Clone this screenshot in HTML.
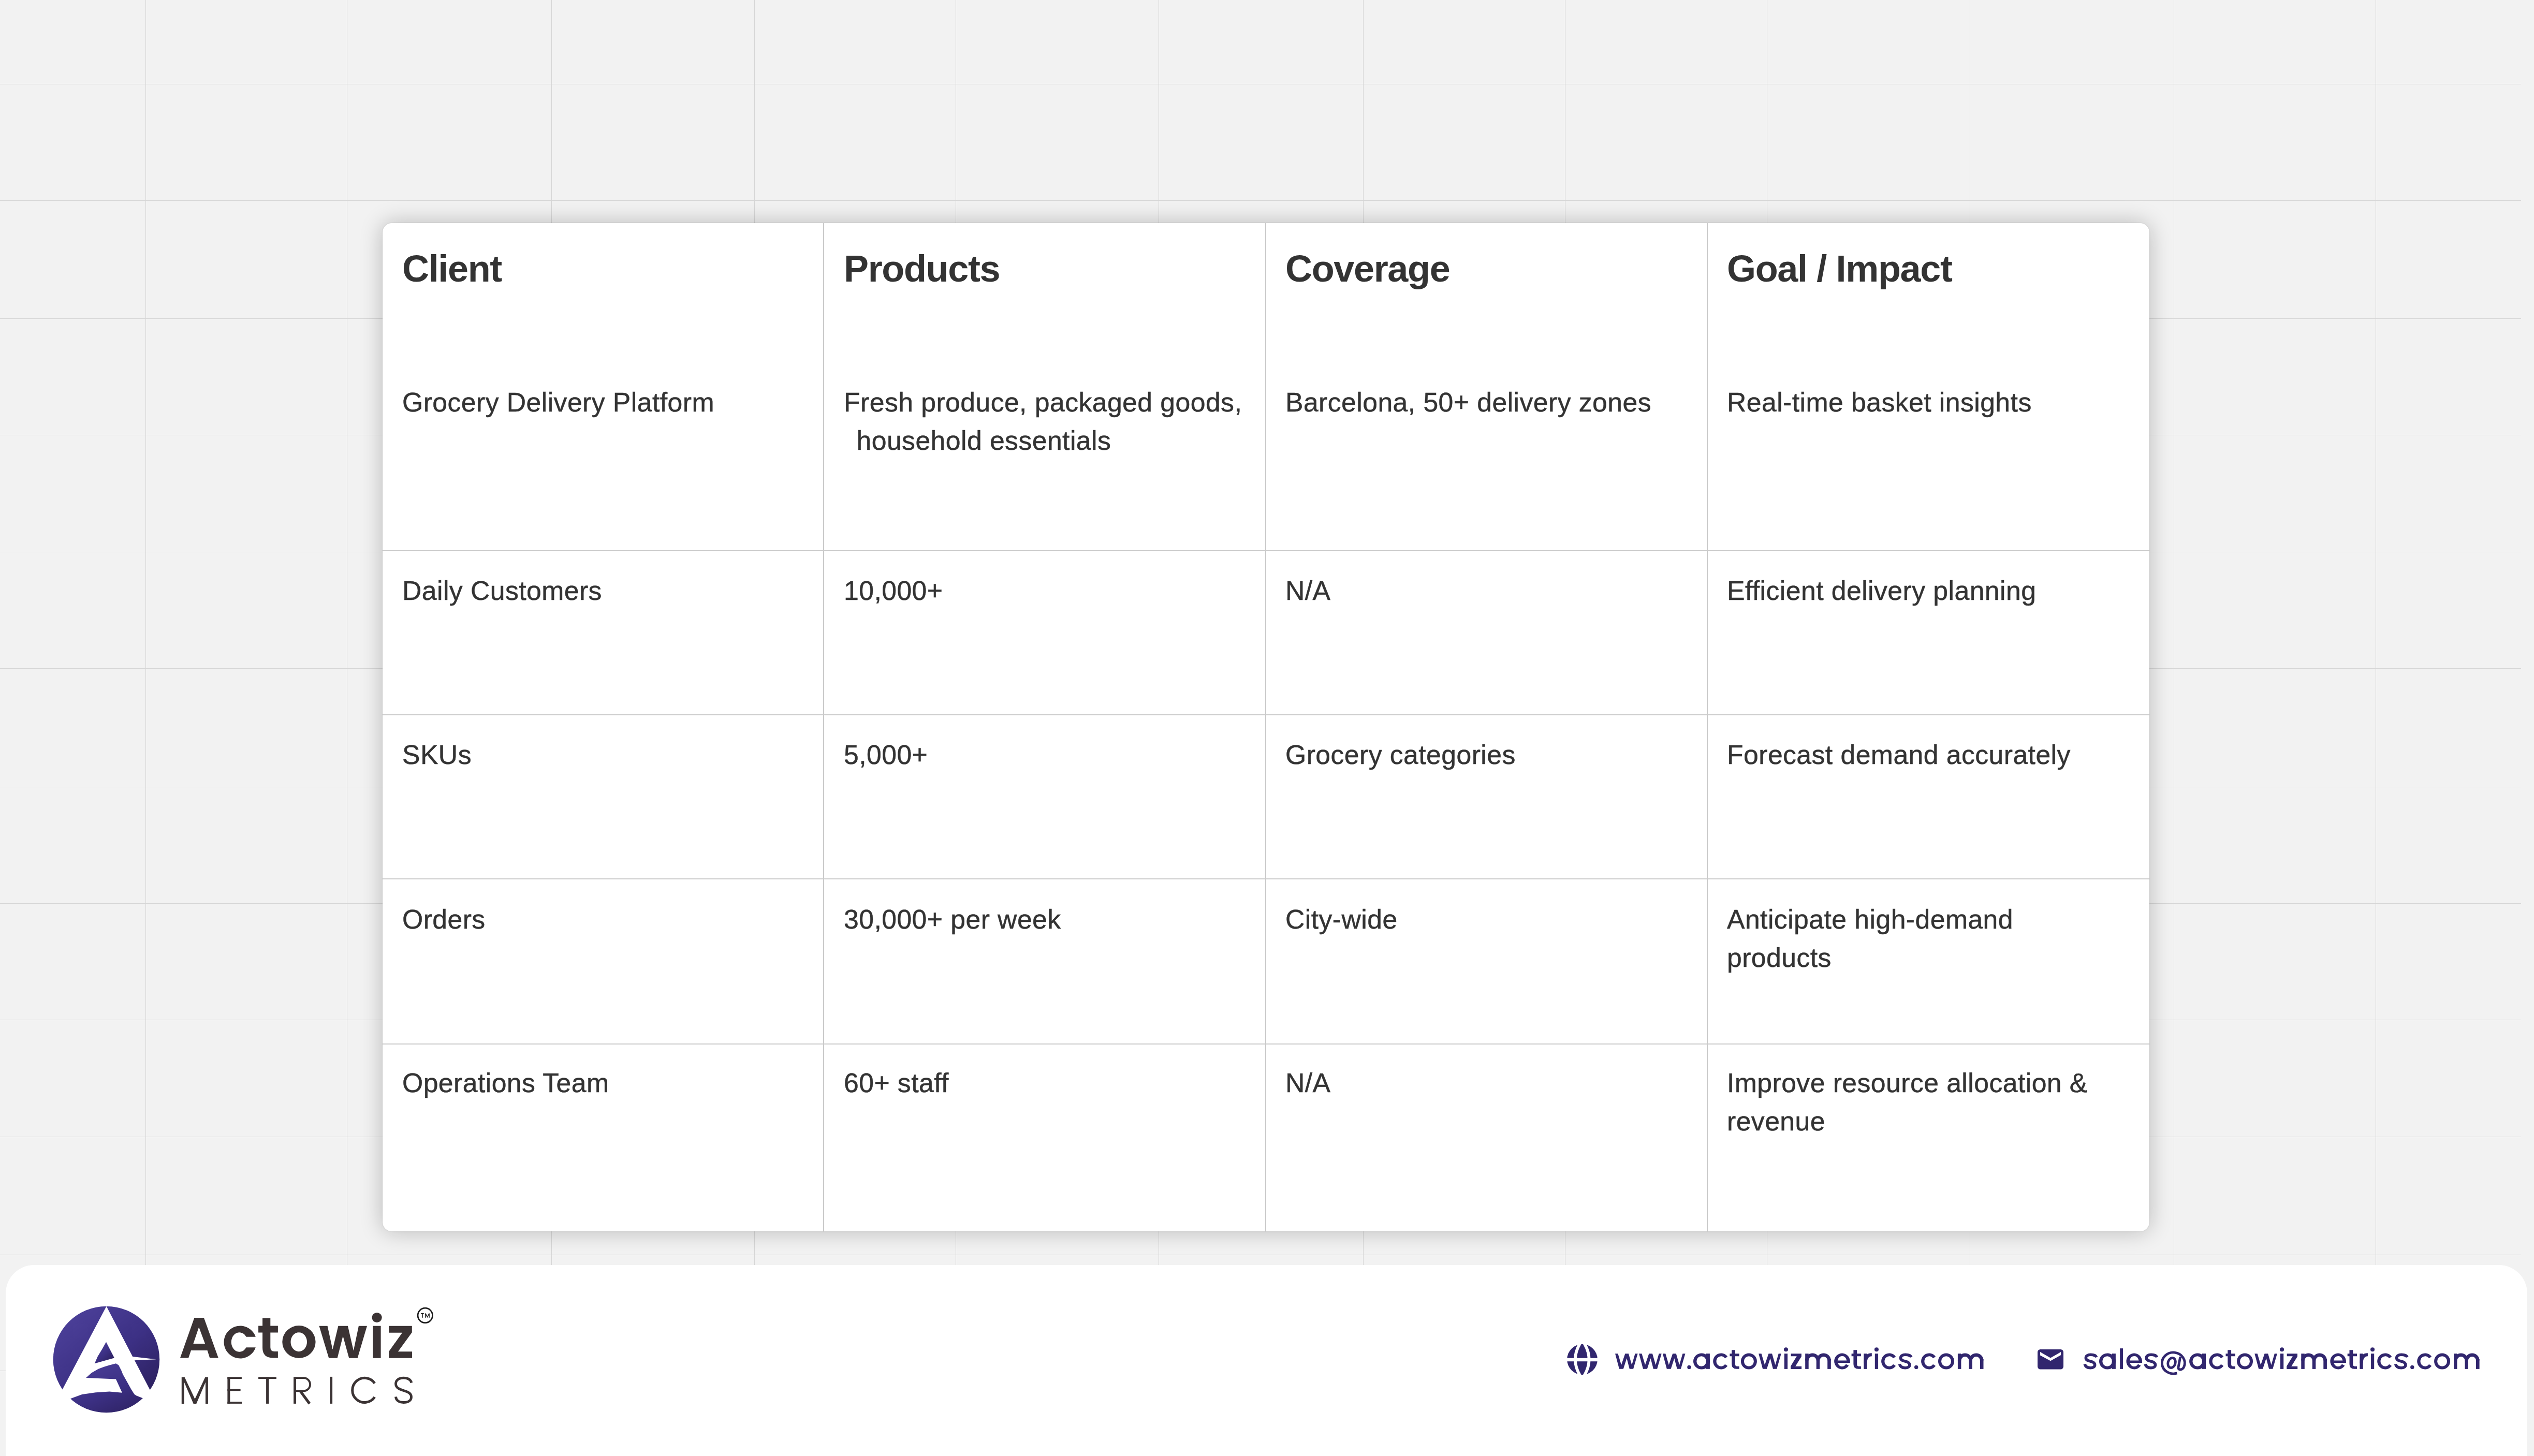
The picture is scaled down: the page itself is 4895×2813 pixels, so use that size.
<!DOCTYPE html>
<html>
<head>
<meta charset="utf-8">
<style>
html,body{margin:0;padding:0;}
body{width:4895px;height:2813px;overflow:hidden;position:relative;background:#f2f2f2;font-family:"Liberation Sans",sans-serif;}
.gv{position:absolute;top:0;width:1px;height:2813px;background:#d6d6d6;}
.gh{position:absolute;left:0;width:4870px;height:1px;background:#d6d6d6;}
#card{position:absolute;left:739px;top:431px;width:3413px;height:1948px;background:#fff;border-radius:18px;box-shadow:0 0 44px rgba(0,0,0,0.24),0 0 2px rgba(0,0,0,0.18);overflow:hidden;}
.cv{position:absolute;top:0;width:2px;height:1948px;background:#c9c9c9;}
.ch{position:absolute;left:0;width:3413px;height:2px;background:#cbcbcb;}
.t{position:absolute;white-space:nowrap;color:#333;font-size:51.7px;line-height:74.6px;letter-spacing:0.45px;-webkit-text-stroke:0.5px #333;margin-top:0.5px;}
.h{position:absolute;white-space:nowrap;color:#333;font-size:72px;font-weight:bold;line-height:80px;letter-spacing:-1.35px;}
#footer{position:absolute;left:11px;top:2444px;width:4871px;height:500px;background:#fff;border-radius:55px;}
</style>
</head>
<body>
<!-- grid -->
<div class="gv" style="left:281px"></div>
<div class="gv" style="left:670px"></div>
<div class="gv" style="left:1065px"></div>
<div class="gv" style="left:1457px"></div>
<div class="gv" style="left:1846px"></div>
<div class="gv" style="left:2238px"></div>
<div class="gv" style="left:2633px"></div>
<div class="gv" style="left:3023px"></div>
<div class="gv" style="left:3413px"></div>
<div class="gv" style="left:3805px"></div>
<div class="gv" style="left:4199px"></div>
<div class="gv" style="left:4589px"></div>
<div class="gh" style="top:162px"></div>
<div class="gh" style="top:387px"></div>
<div class="gh" style="top:615px"></div>
<div class="gh" style="top:840px"></div>
<div class="gh" style="top:1066px"></div>
<div class="gh" style="top:1291px"></div>
<div class="gh" style="top:1520px"></div>
<div class="gh" style="top:1745px"></div>
<div class="gh" style="top:1970px"></div>
<div class="gh" style="top:2196px"></div>
<div class="gh" style="top:2424px"></div>
<div class="gh" style="top:2648px"></div>

<div id="card">
  <div class="cv" style="left:851px"></div>
  <div class="cv" style="left:1705px"></div>
  <div class="cv" style="left:2558px"></div>
  <div class="ch" style="top:632px"></div>
  <div class="ch" style="top:949px"></div>
  <div class="ch" style="top:1266px"></div>
  <div class="ch" style="top:1585px"></div>

  <div class="h" style="left:38px;top:48px">Client</div>
  <div class="h" style="left:891px;top:48px">Products</div>
  <div class="h" style="left:1744px;top:48px">Coverage</div>
  <div class="h" style="left:2597px;top:48px">Goal / Impact</div>

  <div class="t" style="left:38px;top:308px">Grocery Delivery Platform</div>
  <div class="t" style="left:891px;top:308px">Fresh produce, packaged goods,<br><span style="margin-left:24.5px">household essentials</span></div>
  <div class="t" style="left:1744px;top:308px">Barcelona, 50+ delivery zones</div>
  <div class="t" style="left:2597px;top:308px">Real-time basket insights</div>

  <div class="t" style="left:38px;top:672px">Daily Customers</div>
  <div class="t" style="left:891px;top:672px">10,000+</div>
  <div class="t" style="left:1744px;top:672px">N/A</div>
  <div class="t" style="left:2597px;top:672px">Efficient delivery planning</div>

  <div class="t" style="left:38px;top:989px">SKUs</div>
  <div class="t" style="left:891px;top:989px">5,000+</div>
  <div class="t" style="left:1744px;top:989px">Grocery categories</div>
  <div class="t" style="left:2597px;top:989px">Forecast demand accurately</div>

  <div class="t" style="left:38px;top:1307px">Orders</div>
  <div class="t" style="left:891px;top:1307px">30,000+ per week</div>
  <div class="t" style="left:1744px;top:1307px">City-wide</div>
  <div class="t" style="left:2597px;top:1307px">Anticipate high-demand<br>products</div>

  <div class="t" style="left:38px;top:1623px">Operations Team</div>
  <div class="t" style="left:891px;top:1623px">60+ staff</div>
  <div class="t" style="left:1744px;top:1623px">N/A</div>
  <div class="t" style="left:2597px;top:1623px">Improve resource allocation &amp;<br>revenue</div>
</div>

<div id="footer">
  <svg style="position:absolute;left:84px;top:71px" width="220" height="220" viewBox="0 0 1456 1456">
    <defs>
      <linearGradient id="lg" x1="0.15" y1="0.1" x2="0.85" y2="0.95">
        <stop offset="0" stop-color="#4b3f98"/>
        <stop offset="0.5" stop-color="#3c3084"/>
        <stop offset="1" stop-color="#2b1f5c"/>
      </linearGradient>
      <clipPath id="cc"><circle cx="731" cy="738" r="680"/></clipPath>
    </defs>
    <circle cx="731" cy="738" r="680" fill="url(#lg)"/>
    <polygon fill="#fff" points="732,58 1460,1456 -8,1456"/>
    <polygon fill="#fff" points="1040,698 1368,736 1080,750"/>
    <polygon fill="url(#lg)" points="728,515 833,718 581,790 620,700 680,600"/>
    <g clip-path="url(#cc)">
    <polygon fill="url(#lg)" points="471,973 540,910 629,858 700,832 770,811 853,790 888,811 924,882 942,929 995,1023 1048,1118 1089,1183 1113,1200 1196,1233 1400,1300 1400,1500 60,1500 120,1300 298,1230 420,1185 593,1160 770,1148 933,1163 853,989"/>
    </g>
  </svg>
    

  <svg style="position:absolute;left:3016px;top:153px" width="60" height="60" viewBox="0 0 60 60">
    <circle cx="29.5" cy="29.5" r="29.4" fill="#31266e"/>
    <rect x="-1" y="26.8" width="62" height="6.4" fill="#fff"/>
    <path d="M26.1,-3.5 L24.2,0 Q7.8,29.5 24.2,59 L26.1,62.5" fill="none" stroke="#fff" stroke-width="5.8" stroke-linejoin="round"/>
    <path d="M32.5,-3.5 L34.4,0 Q50.8,29.5 34.4,59 L32.5,62.5" fill="none" stroke="#fff" stroke-width="5.8" stroke-linejoin="round"/>
  </svg>
  <svg style="position:absolute;left:3925px;top:163px" width="50" height="39" viewBox="0 0 50 39">
    <rect x="0" y="0" width="50" height="38.5" rx="5.5" fill="#31266e"/>
    <polygon points="5,5.1 25,16.4 45.1,5 45.1,11.1 25,22.3 5,11.5" fill="#fff"/>
  </svg>
</div>
<svg style="position:absolute;left:0;top:0" width="4895" height="2813" viewBox="0 0 4895 2813">
  <g fill="#3b3334">
    <polygon points="350.8,2711.9 350.8,2660.8 356.6,2660.8 376.5,2702.8 396.4,2660.8 401.9,2660.8 401.9,2711.9 397,2711.9 397,2670.5 379.3,2711.9 373.7,2711.9 355.8,2670.5 355.8,2711.9"/>
    <rect x="439.4" y="2660.3" width="5" height="51.6"/>
    <rect x="439.4" y="2660.3" width="27.5" height="3.8"/>
    <rect x="439.4" y="2683.7" width="25.2" height="3.6"/>
    <rect x="439.4" y="2708.1" width="27.6" height="3.8"/>
    <rect x="499.1" y="2660.3" width="34.8" height="3.8"/>
    <rect x="514.1" y="2660.3" width="5.3" height="51.6"/>
    <rect x="567.1" y="2660.3" width="4.9" height="51.6"/>
    <rect x="637.4" y="2659.9" width="4.7" height="52"/>
  </g>
  <defs>
    <g id="gw"><polygon points="0,2615.15 5.37,2615.15 11.87,2636.93 19.26,2615.15 25.88,2615.15 32.2,2636.93 38.51,2615.15 43.56,2615.15 35.04,2644.82 27.78,2644.82 22.41,2624.31 15.78,2644.82 7.89,2644.82"/></g>
    <g id="gdot"><circle cx="3.7" cy="2641.4" r="3.7"/></g>
    <g id="ga"><path fill-rule="evenodd" d="M0,2630 A16,15.5 0 1 0 32,2630 A16,15.5 0 1 0 0,2630 Z M6.3,2630 A9.3,9.8 0 1 0 24.9,2630 A9.3,9.8 0 1 0 6.3,2630 Z"/><rect x="24.9" y="2615.15" width="7" height="29.65"/></g>
    <g id="gc"><path d="M28.04,2620.89 A15.5,15.5 0 1 0 28.04,2639.11 L22.94,2635.76 A9.2,9.8 0 1 1 22.94,2624.24 Z"/></g>
    <g id="gt"><path d="M3.8,2608.2 H10.6 V2615.15 H18.3 V2620.2 H10.6 V2636 Q10.6,2639.8 14.4,2639.8 H18.3 V2644.8 H13.2 Q3.8,2644.8 3.8,2635.5 V2620.2 H0 V2615.15 H3.8 Z"/></g>
    <g id="go"><path fill-rule="evenodd" d="M0,2630 A15.5,15.5 0 1 0 31,2630 A15.5,15.5 0 1 0 0,2630 Z M6,2630 A9.5,9.8 0 1 0 25,2630 A9.5,9.8 0 1 0 6,2630 Z"/></g>
    <g id="gi"><rect x="0" y="2615.2" width="6.3" height="29.7"/><circle cx="3.15" cy="2607.3" r="4"/></g>
    <g id="gz"><polygon points="0.5,2615.2 20.8,2615.2 20.8,2620.8 9.1,2639.8 21,2639.8 21,2644.9 0,2644.9 0,2639.4 11.7,2620.3 0.5,2620.3"/></g>
    <g id="gm"><rect x="0" y="2615.2" width="6.5" height="29.7"/><rect x="21.5" y="2626" width="6.5" height="18.9"/><rect x="43" y="2626" width="6.6" height="18.9"/><path d="M0,2628.5 A14,14 0 0 1 28,2628.5 H21.5 A7.5,7.5 0 0 0 6.5,2628.5 Z M21.5,2628.5 A14.05,14.05 0 0 1 49.6,2628.5 H43 A7.5,7.5 0 0 0 28,2628.5 Z"/></g>
    <g id="ge"><path d="M30.6,2630 A15.3,15.45 0 1 0 28.13,2638.41 L22.68,2635.5 A8.8,10.1 0 1 1 24.1,2630 Z"/><rect x="6" y="2628.5" width="24.6" height="4.5"/></g>
    <g id="gr"><rect x="0" y="2615.2" width="6.3" height="29.7"/><path d="M0,2634 C0,2620 5.7,2614.3 15.5,2614.3 V2620.3 C8.7,2620.3 6.3,2626 6.3,2634 Z"/></g>
    <g id="gs"><path fill="none" stroke="#31266e" stroke-width="5.5" d="M23.8,2622.3 C23,2619.3 18.5,2617.3 12.4,2617.3 C7,2617.3 3.3,2619.8 3.3,2623.5 C3.3,2627.8 7.5,2628.8 12,2630 C17,2631.2 20.7,2632.7 20.7,2637 C20.7,2640.5 17.3,2642.7 12.2,2642.7 C6,2642.7 2.2,2640 1.2,2635.4"/></g>
    <g id="gl"><rect x="0" y="2605.1" width="6" height="39.8"/></g>
    <g id="gat"><g fill="none" stroke="#31266e" stroke-width="4.8"><path d="M31.56,2652.88 A22,20.5 0 1 1 45.07,2640.51"/><ellipse cx="0" cy="0" rx="7.1" ry="9.7" transform="translate(21.2,2633) rotate(18)"/><path d="M37.9,2621.2 L34.1,2641.5 Q33.9,2646.3 38.3,2646 Q42.8,2645.6 45.07,2640.51"/></g></g>
  </defs>
  <g fill="#31266e"><use href="#gw" x="3120.05"/><use href="#gw" x="3166.1"/><use href="#gw" x="3211.9"/><use href="#gdot" x="3259.3"/><use href="#ga" x="3271.0"/><use href="#gc" x="3309.2"/><use href="#gt" x="3341.4"/><use href="#go" x="3362.9"/><use href="#gw" x="3397.2"/><use href="#gi" x="3446.8"/><use href="#gz" x="3459.1"/><use href="#gm" x="3487.2"/><use href="#ge" x="3543.2"/><use href="#gt" x="3576.6"/><use href="#gr" x="3600.3"/><use href="#gi" x="3621.8"/><use href="#gc" x="3634.1"/><use href="#gs" x="3668.2"/><use href="#gdot" x="3698.0"/><use href="#gc" x="3711.1"/><use href="#go" x="3744.0"/><use href="#gm" x="3781.9"/>
<use href="#gs" x="4026"/><use href="#ga" x="4055"/><use href="#gl" x="4095.1"/><use href="#ge" x="4107.4"/><use href="#gs" x="4142.8"/><use href="#gat" x="4173.9"/><use href="#ga" x="4229.1"/><use href="#gc" x="4267.3"/><use href="#gt" x="4299.5"/><use href="#go" x="4321.0"/><use href="#gw" x="4355.3"/><use href="#gi" x="4404.9"/><use href="#gz" x="4417.2"/><use href="#gm" x="4445.3"/><use href="#ge" x="4501.3"/><use href="#gt" x="4534.7"/><use href="#gr" x="4558.4"/><use href="#gi" x="4579.9"/><use href="#gc" x="4592.2"/><use href="#gs" x="4626.3"/><use href="#gdot" x="4656.1"/><use href="#gc" x="4669.2"/><use href="#go" x="4702.1"/><use href="#gm" x="4740.0"/></g>
  <g>
    <circle cx="821.3" cy="2541.4" r="14.2" fill="none" stroke="#1a1a1a" stroke-width="2.7"/>
    <rect x="812.9" y="2536.9" width="5.9" height="1.5" fill="#1a1a1a"/>
    <rect x="815.1" y="2536.9" width="1.6" height="8.9" fill="#1a1a1a"/>
    <polyline points="821.9,2545.8 821.9,2537.6 825.5,2544.4 829.1,2537.6 829.1,2545.8" fill="none" stroke="#1a1a1a" stroke-width="1.5" stroke-linejoin="miter"/>
  </g>
  <g fill="#3b3334" fill-rule="evenodd">
    <path d="M348,2623.4 L375.4,2546 H393.9 L421.8,2623.4 H405.2 L400.6,2609 H369 L364.1,2623.4 Z M384.2,2564 L396.1,2596 H373.4 Z"/>
    <path d="M493.8,2582.7 A31.5,31.5 0 1 0 493.8,2603.3 H475.6 A15.7,18.8 0 1 1 475.6,2582.7 Z"/>
    <path d="M507.1,2546.6 H522.3 V2561.5 H536.9 V2574.6 H522.3 V2603 Q522.3,2611 530,2611 H536.9 V2623.4 H527 Q507.1,2623.4 507.1,2603.4 V2574.6 H499.1 V2561.5 H507.1 Z"/>
    <path d="M545.3,2592.5 A32.15,31.5 0 1 0 609.6,2592.5 A32.15,31.5 0 1 0 545.3,2592.5 Z M561.5,2592.7 A15.75,18.5 0 1 0 593,2592.7 A15.75,18.5 0 1 0 561.5,2592.7 Z"/>
    <polygon points="616.5,2561.7 632.6,2561.7 642.5,2607.3 653.4,2561.7 671.9,2561.7 682.9,2609.4 692.9,2561.7 709,2561.7 690.7,2623.8 674.2,2623.8 662.5,2581.2 651.7,2623.8 635.2,2623.8"/>
    <rect x="720.2" y="2561.7" width="15.4" height="62.1"/>
    <circle cx="728.1" cy="2545.5" r="9.55"/>
    <polygon points="751.1,2561.7 795.8,2561.7 795.8,2574.3 768.9,2611.2 796,2611.2 796,2623.8 751.1,2623.8 751.1,2611.2 777.1,2574.7 751.1,2574.7"/>
  </g>
  <g fill="none" stroke="#3b3334">
    <path d="M569,2662.2 H586.5 A12.5,12.5 0 0 1 586.5,2687.3 H569" stroke-width="3.8"/>
    <path d="M580,2687.5 L598,2711.9" stroke-width="5.2"/>
    <path d="M723.8,2672.6 A23.6,23.6 0 1 0 723.8,2699.2" stroke-width="5"/>
    <path d="M795,2671.5 C793,2665 787,2662.2 779.5,2662.2 C770,2662.2 764.5,2667 764.5,2673.5 C764.5,2681 771,2683.5 779.5,2686.5 C789,2689.5 794.5,2692 794.5,2699 C794.5,2706 788,2709.5 779.5,2709.5 C770,2709.5 765,2705 764.5,2698.5" stroke-width="4.8"/>
  </g>
</svg>
</body>
</html>
